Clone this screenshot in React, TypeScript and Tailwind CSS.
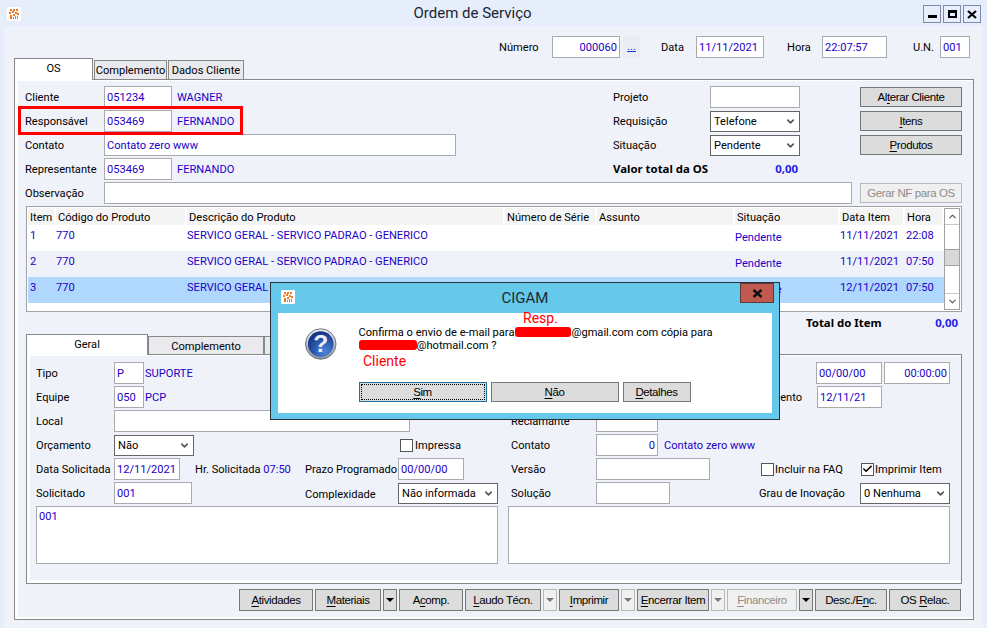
import { ChevronDown, ChevronUp, Check } from "lucide-react"
import type { ReactNode } from "react"

const Logo = () => (
    <svg width="14" height="14" viewBox="0 0 14 14" className="shrink-0">
        <rect width="14" height="14" rx="1" fill="#ffffff" />
        <path d="M3 2h2v2H3zM6 2h2v2H6zM9 2h2v2H9zM2 5h2v2H2zM5 4h2v2H5zM8 5h2v2H8zM10 6h2v2h-2zM6 7h2v2H6zM3 8h2v4H3zM8 9h1v3H8zM10 9h1v3h-1zM6 10h1v2H6z" fill="#f47a20" />
    </svg>
)

const QuestionIcon = () => (
    <svg width="32" height="32" viewBox="0 0 32 32">
        <defs>
            <radialGradient id="qfill" cx="65%" cy="80%" r="80%">
                <stop offset="0%" stopColor="#4a86e0" />
                <stop offset="100%" stopColor="#12307f" />
            </radialGradient>
            <linearGradient id="qring" x1="0" y1="0" x2="0" y2="1">
                <stop offset="0%" stopColor="#eceef2" />
                <stop offset="100%" stopColor="#8d929c" />
            </linearGradient>
        </defs>
        <circle cx="16" cy="16" r="15.5" fill="url(#qring)" stroke="#6f7480" strokeWidth="1" />
        <circle cx="16" cy="16" r="13" fill="url(#qfill)" />
        <text x="16" y="24.5" textAnchor="middle" fontSize="25" fontWeight="700" fill="#e8edf6" fontFamily="Liberation Sans, sans-serif">?</text>
    </svg>
)

const Field = ({ w, children, right = false }: { w: string; children?: ReactNode; right?: boolean }) => (
    <div className={`${w} h-[22px] shrink-0 bg-white border border-[#a8aaae] flex items-center px-[2px] pt-[2px] text-[#1a00c8] ${right ? "justify-end" : ""}`}>
        {children}
    </div>
)

const Select = ({ w, children }: { w: string; children: ReactNode }) => (
    <div className={`${w} h-[21px] shrink-0 bg-white border border-[#666] flex items-center justify-between pl-[3px] pr-[3px]`}>
        <span className="pt-[1px]">{children}</span>
        <ChevronDown size={11} strokeWidth={3.5} className="text-[#555]" />
    </div>
)

const Btn = ({ w, children, disabled = false, h = "h-[22px]" }: { w: string; children: ReactNode; disabled?: boolean; h?: string }) => (
    <div className={`${w} ${h} shrink-0 flex items-center justify-center border [font-family:'Liberation_Sans',sans-serif] text-[11.5px] tracking-[-0.4px] ${disabled ? "bg-[#f0f0f0] border-[#b8b8b8] text-[#8d8d8d]" : "bg-[#dcdcdc] border-[#777] text-black"}`}>
        <span>{children}</span>
    </div>
)

const Arrow = ({ disabled = false }: { disabled?: boolean }) => (
    <div className={`w-[14px] h-[22px] shrink-0 flex items-center justify-center border ${disabled ? "bg-[#f0f0f0] border-[#b8b8b8]" : "bg-[#dcdcdc] border-[#777]"}`}>
        <div className={`w-0 h-0 border-l-[4px] border-r-[4px] border-t-[4px] border-l-transparent border-r-transparent ${disabled ? "border-t-[#777]" : "border-t-black"}`} />
    </div>
)

const U = ({ children }: { children: ReactNode }) => <span className="underline underline-offset-2">{children}</span>

const Label = ({ w, children }: { w: string; children: ReactNode }) => <div className={`${w} shrink-0 pt-[1px]`}>{children}</div>

const Blue = ({ children, className = "" }: { children: ReactNode; className?: string }) => (
    <span className={`text-[#1a00c8] pt-[1px] ${className}`}>{children}</span>
)

const Box = ({ checked = false }: { checked?: boolean }) => (
    <div className="w-[13px] h-[13px] bg-white border border-[#555] shrink-0 flex items-center justify-center">
        {checked && <Check size={12} strokeWidth={3.5} className="text-black" />}
    </div>
)

const columns = [
    { label: "Item", w: "w-[28px]" },
    { label: "Código do Produto", w: "w-[131px]" },
    { label: "Descrição do Produto", w: "w-[318px]" },
    { label: "Número de Série", w: "w-[92px]" },
    { label: "Assunto", w: "w-[138px]" },
    { label: "Situação", w: "w-[105px]" },
    { label: "Data Item", w: "w-[65px]" },
    { label: "Hora", w: "w-[39px]" },
]

const items = [
    { n: "1", date: "11/11/2021", hour: "22:08", bg: "bg-white" },
    { n: "2", date: "11/11/2021", hour: "07:50", bg: "bg-[#f0f2f9]" },
    { n: "3", date: "12/11/2021", hour: "07:50", bg: "bg-[#b0d8ff]" },
]

const bottomButtons: { w: string; node: ReactNode; disabled?: boolean; arrow?: boolean; arrowDisabled?: boolean }[] = [
    { w: "w-[74px]", node: <><U>A</U>tividades</> },
    { w: "w-[66px]", node: <><U>M</U>ateriais</>, arrow: true },
    { w: "w-[64px]", node: <>A<U>c</U>omp.</> },
    { w: "w-[76px]", node: <><U>L</U>audo Técn.</>, arrow: true, arrowDisabled: true },
    { w: "w-[60px]", node: <><U>I</U>mprimir</>, arrow: true, arrowDisabled: true },
    { w: "w-[72px]", node: <><U>E</U>ncerrar Item</>, arrow: true, arrowDisabled: true },
    { w: "w-[70px]", node: <><U>F</U>inanceiro</>, disabled: true, arrow: true },
    { w: "w-[72px]", node: <>Desc./E<U>n</U>c.</> },
    { w: "w-[72px]", node: <>OS <U>R</U>elac.</> },
]

function ConfirmDialog() {
    return (
        <div className="absolute left-[270px] top-[282px] w-[510px] h-[138px] bg-[#66c8ea] border border-[#25343d] px-[7px] flex flex-col z-20">
            <div className="relative h-[30px] shrink-0 flex items-center justify-center">
                <div className="absolute left-[3px] top-[7px]"><Logo /></div>
                <span className="text-[15px] text-[#1c2a30]">CIGAM</span>
                <div className="absolute right-[-2px] top-0 w-[34px] h-[20px] bg-[#c05a50] border border-[#5e3a36] flex items-center justify-center">
                    <svg width="11" height="9" viewBox="0 0 11 9"><path d="M1.5 1l8 7M9.5 1l-8 7" stroke="#111" strokeWidth="2.4" /></svg>
                </div>
            </div>
            <div className="h-[100px] bg-white flex pl-[27px] pt-[15px]">
                <QuestionIcon />
                <div className="ml-[22px] w-[420px] flex flex-col">
                    <p className="leading-[13px] -mt-[2px] h-[26px]">
                        Confirma o envio de e-mail para<span className="inline-block w-[56px] h-[10px] bg-[#f00] rounded-[3px] ml-[1px] align-[-1px]" />@gmail.com com cópia para<br />
                        <span className="inline-block w-[58px] h-[10px] bg-[#f00] rounded-[3px] align-[-1px]" />@hotmail.com ?
                    </p>
                    <div className="flex gap-[4px] mt-[30px]">
                        <div className="w-[128px] h-[20px] bg-[#dcdcdc] border border-[#1f6f9f] p-[1px]">
                            <div className="w-full h-full border border-dotted border-black flex items-center justify-center [font-family:'Liberation_Sans',sans-serif] text-[11.5px] tracking-[-0.4px]">
                                <span><U>S</U>im</span>
                            </div>
                        </div>
                        <Btn w="w-[128px]" h="h-[20px]"><U>N</U>ão</Btn>
                        <Btn w="w-[68px]" h="h-[20px]"><U>D</U>etalhes</Btn>
                    </div>
                </div>
            </div>
            <span className="absolute left-[252px] top-[27px] text-[14px] text-[#f00]">Resp.</span>
            <span className="absolute left-[92px] top-[70px] text-[14px] text-[#f00]">Cliente</span>
        </div>
    )
}

export default function App() {
    return (
        <div className="relative w-[987px] h-[628px] overflow-hidden bg-[#e6eefc] text-black text-[11.1px] leading-[16px] whitespace-nowrap [font-family:'Roboto',sans-serif]">
            {/* Title bar */}
            <div className="relative h-[26px] flex items-center justify-center pr-[42px]">
                <div className="absolute left-[7px] top-[7px]"><Logo /></div>
                <span className="text-[15px] text-[#1c2430]">Ordem de Serviço</span>
                <div className="absolute right-[6px] top-[5px] flex gap-[2px]">
                    <div className="w-[18px] h-[18px] border border-[#7f8aa8] bg-[#e6eefc] flex items-center justify-center">
                        <div className="w-[9px] h-[3px] bg-black mt-[4px]" />
                    </div>
                    <div className="w-[18px] h-[18px] border border-[#7f8aa8] bg-[#e6eefc] flex items-center justify-center">
                        <div className="w-[9px] h-[8px] border-2 border-t-[3px] border-black" />
                    </div>
                    <div className="w-[18px] h-[18px] border border-[#7f8aa8] bg-[#e6eefc] flex items-center justify-center">
                        <svg width="10" height="9" viewBox="0 0 10 9"><path d="M1 1l8 7M9 1l-8 7" stroke="#000" strokeWidth="2.2" /></svg>
                    </div>
                </div>
            </div>

            {/* Form */}
            <div className="mx-[4px] h-[602px] bg-[#f0f2f9]">
                <div className="flex items-center pt-[10px] pl-[495px]">
                    <Label w="w-[53px]">Número</Label>
                    <Field w="w-[68px]" right>000060</Field>
                    <div className="ml-[3px] w-[17px] h-[22px] bg-[#ecedf2] flex items-center justify-center text-[#1a30d8] underline">...</div>
                    <Label w="w-[35px] ml-[21px]">Data</Label>
                    <Field w="w-[68px]">11/11/2021</Field>
                    <Label w="w-[35px] ml-[23px]">Hora</Label>
                    <Field w="w-[65px]">22:07:57</Field>
                    <Label w="w-[27px] ml-[26px]">U.N.</Label>
                    <Field w="w-[30px]">001</Field>
                </div>

                {/* Upper tabs */}
                <div className="flex items-end h-[21px] pl-[10px]">
                    <div className="relative z-10 w-[79px] h-[22px] -mb-[1px] bg-white border border-b-0 border-[#888] flex items-center justify-center pb-[1px]">OS</div>
                    <div className="ml-[1px] w-[73px] h-[19px] bg-[#e9e9ee] border border-b-0 border-[#888] flex items-center justify-center pt-[2px]">Complemento</div>
                    <div className="ml-[1px] w-[76px] h-[19px] bg-[#e9e9ee] border border-b-0 border-[#888] flex items-center justify-center pt-[2px]">Dados Cliente</div>
                </div>

                <div className="ml-[10px] w-[960px] h-[541px] border border-[#888] bg-white">
                    <div className="relative ml-[3px] mt-[1px] h-[536px] bg-[#f0f2f9]">
                        <div className="flex flex-col gap-[2px] pt-[5px] pl-[7px]">
                            <div className="flex items-center h-[22px]">
                                <Label w="w-[79px]">Cliente</Label>
                                <Field w="w-[68px]">051234</Field>
                                <Blue className="ml-[5px]">WAGNER</Blue>
                                <Label w="w-[97px] ml-auto">Projeto</Label>
                                <Field w="w-[90px]" />
                                <Btn w="w-[102px] ml-[60px] mr-[11px]" h="h-[20px]">Al<U>t</U>erar Cliente</Btn>
                            </div>
                            <div className="flex items-center h-[22px]">
                                <Label w="w-[79px]">Responsável</Label>
                                <Field w="w-[68px]">053469</Field>
                                <Blue className="ml-[5px]">FERNANDO</Blue>
                                <Label w="w-[97px] ml-auto">Requisição</Label>
                                <Select w="w-[90px]">Telefone</Select>
                                <Btn w="w-[102px] ml-[60px] mr-[11px]" h="h-[20px]"><U>I</U>tens</Btn>
                            </div>
                            <div className="flex items-center h-[22px]">
                                <Label w="w-[79px]">Contato</Label>
                                <Field w="w-[352px]">Contato zero www</Field>
                                <Label w="w-[97px] ml-auto">Situação</Label>
                                <Select w="w-[90px]">Pendente</Select>
                                <Btn w="w-[102px] ml-[60px] mr-[11px]" h="h-[20px]"><U>P</U>rodutos</Btn>
                            </div>
                            <div className="flex items-center h-[22px]">
                                <Label w="w-[79px]">Representante</Label>
                                <Field w="w-[68px]">053469</Field>
                                <Blue className="ml-[5px]">FERNANDO</Blue>
                                <div className="ml-auto mr-[175px] w-[185px] flex justify-between font-bold text-[11.4px] [font-family:'Noto_Sans',sans-serif]">
                                    <span>Valor total da OS</span>
                                    <span className="text-[#1a20e8]">0,00</span>
                                </div>
                            </div>
                            <div className="flex items-center h-[22px]">
                                <Label w="w-[79px]">Observação</Label>
                                <Field w="w-[748px]" />
                                <Btn w="w-[102px] ml-[8px]" h="h-[20px]" disabled>Gerar NF para OS</Btn>
                            </div>
                        </div>

                        {/* Item grid */}
                        <div className="mt-[2px] ml-[8px] w-[936px] h-[106px] border border-[#a0a2a8] bg-white flex p-[1px]">
                            <div className="w-[916px]">
                                <div className="flex h-[17px] bg-[#f4f4f4]">
                                    {columns.map((c) => (
                                        <div key={c.label} className={`${c.w} shrink-0 pl-[2px] pt-[2px] border-r-2 border-white flex items-center`}>{c.label}</div>
                                    ))}
                                </div>
                                {items.map((it) => (
                                    <div key={it.n} className={`flex h-[26px] ${it.bg} text-[#1a00c8]`}>
                                        <div className="w-[28px] pl-[2px] pt-[3px]">{it.n}</div>
                                        <div className="w-[131px] pt-[3px]">770</div>
                                        <div className="w-[318px] pt-[3px]">SERVICO GERAL - SERVICO PADRAO - GENERICO</div>
                                        <div className="w-[92px]" />
                                        <div className="w-[138px]" />
                                        <div className="w-[105px] pt-[5px]">Pendente</div>
                                        <div className="w-[65px] pt-[3px]">{it.date}</div>
                                        <div className="w-[39px] pt-[3px] pl-[1px]">{it.hour}</div>
                                    </div>
                                ))}
                            </div>
                            <div className="w-[17px] border border-[#a0a2a8] flex flex-col bg-white">
                                <div className="h-[16px] flex items-center justify-center border-b border-[#c8c8c8]"><ChevronUp size={11} strokeWidth={2.5} className="text-[#555]" /></div>
                                <div className="h-[24px]" />
                                <div className="h-[17px] bg-[#d8d8d8] border-y border-[#a0a0a0]" />
                                <div className="flex-1" />
                                <div className="h-[16px] flex items-center justify-center border-t border-[#c8c8c8]"><ChevronDown size={11} strokeWidth={2.5} className="text-[#555]" /></div>
                            </div>
                        </div>

                        <div className="flex items-center h-[22px] ml-[8px] w-[936px] pl-[780px] pr-[4px] font-bold text-[11.4px] [font-family:'Noto_Sans',sans-serif]">
                            <span>Total do Item</span>
                            <span className="ml-auto text-[#1a20e8]">0,00</span>
                        </div>

                        {/* Lower tabs */}
                        <div className="flex items-end h-[20px] ml-[8px]">
                            <div className="relative z-10 w-[122px] h-[21px] -mb-[1px] bg-white border border-b-0 border-[#888] flex items-center justify-center pb-[1px]">Geral</div>
                            <div className="w-[116px] h-[18px] bg-[#e9e9ee] border border-b-0 border-[#888] flex items-center justify-center pt-[2px]">Complemento</div>
                            <div className="w-[100px] h-[18px] bg-[#e9e9ee] border border-b-0 border-[#888]" />
                        </div>

                        <div className="ml-[8px] w-[936px] h-[230px] border border-[#888] bg-white">
                            <div className="ml-[3px] mt-[1px] h-[224px] bg-[#f0f2f9] pl-[6px] pt-[6px]">
                                <div className="w-[914px] flex flex-col gap-[2px]">
                                    <div className="flex items-center h-[22px]">
                                        <Label w="w-[78px]">Tipo</Label>
                                        <Field w="w-[30px]">P</Field>
                                        <Blue className="ml-[1px]">SUPORTE</Blue>
                                        <Field w="w-[66px] ml-auto">00/00/00</Field>
                                        <Field w="w-[66px] ml-[2px]" right>00:00:00</Field>
                                    </div>
                                    <div className="flex items-center h-[22px]">
                                        <Label w="w-[78px]">Equipe</Label>
                                        <Field w="w-[30px]">050</Field>
                                        <Blue className="ml-[1px]">PCP</Blue>
                                        <span className="ml-auto mr-[15px] pt-[1px]">Vencimento</span>
                                        <Field w="w-[65px] mr-[68px]">12/11/21</Field>
                                    </div>
                                    <div className="flex items-center h-[22px]">
                                        <Label w="w-[78px]">Local</Label>
                                        <Field w="w-[296px]" />
                                        <Label w="w-[85px] ml-[101px]">Reclamante</Label>
                                        <Field w="w-[62px]" />
                                    </div>
                                    <div className="flex items-center h-[22px]">
                                        <Label w="w-[78px]">Orçamento</Label>
                                        <Select w="w-[80px]">Não</Select>
                                        <div className="ml-[206px] w-[111px] flex items-center gap-[2px]"><Box /><span className="pt-[1px]">Impressa</span></div>
                                        <Label w="w-[85px]">Contato</Label>
                                        <Field w="w-[62px]" right>0</Field>
                                        <Blue className="ml-[6px]">Contato zero www</Blue>
                                    </div>
                                    <div className="flex items-center h-[22px]">
                                        <Label w="w-[78px]">Data Solicitada</Label>
                                        <Field w="w-[66px]">12/11/2021</Field>
                                        <div className="ml-[15px] w-[110px] shrink-0 pt-[1px]">Hr. Solicitada <Blue>07:50</Blue></div>
                                        <Label w="w-[93px]">Prazo Programado</Label>
                                        <Field w="w-[66px]">00/00/00</Field>
                                        <Label w="w-[85px] ml-[47px]">Versão</Label>
                                        <Field w="w-[114px]" />
                                        <div className="ml-[51px] w-[100px] flex items-center gap-[1px]"><Box /><span className="pt-[1px]">Incluir na FAQ</span></div>
                                        <div className="flex items-center gap-[1px]"><Box checked /><span className="pt-[1px]">Imprimir Item</span></div>
                                    </div>
                                    <div className="flex items-center h-[22px]">
                                        <Label w="w-[78px]">Solicitado</Label>
                                        <Field w="w-[78px]">001</Field>
                                        <div className="w-[93px] ml-[113px] pt-[4px] shrink-0">Complexidade</div>
                                        <Select w="w-[100px]">Não informada</Select>
                                        <Label w="w-[85px] ml-[13px]">Solução</Label>
                                        <Field w="w-[74px]" />
                                        <Label w="w-[101px] ml-[89px]">Grau de Inovação</Label>
                                        <Select w="w-[90px]">0 Nenhuma</Select>
                                    </div>
                                    <div className="flex h-[58px] gap-[10px]">
                                        <div className="w-[462px] bg-white border border-[#a8aaae] px-[2px] pt-[2px] text-[#1a00c8]">001</div>
                                        <div className="w-[442px] bg-white border border-[#a8aaae]" />
                                    </div>
                                </div>
                            </div>
                        </div>

                        <div className="flex justify-end gap-[2px] ml-[8px] mt-[5px] w-[936px] pr-[1px]">
                            {bottomButtons.map((b, i) => (
                                <div key={i} className="flex gap-[2px]">
                                    <Btn w={b.w} disabled={b.disabled}>{b.node}</Btn>
                                    {b.arrow && <Arrow disabled={b.arrowDisabled} />}
                                </div>
                            ))}
                        </div>
                    </div>
                </div>
            </div>

            {/* Red highlight */}
            <div className="absolute left-[18px] top-[106px] w-[225px] h-[29px] border-[3px] border-[#f00] z-10" />

            <ConfirmDialog />
        </div>
    )
}
